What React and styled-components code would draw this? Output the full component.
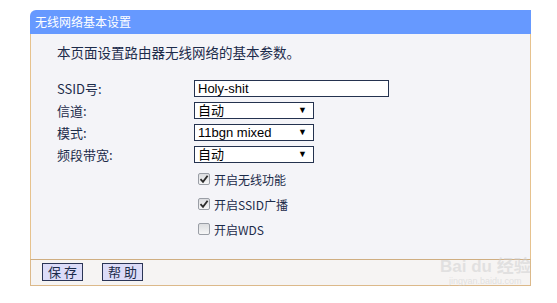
import React from "react";
import styled, { createGlobalStyle } from "styled-components";

const GlobalStyle = createGlobalStyle`
  body {
    margin: 0;
    background: #ffffff;
    font-family: "Noto Sans CJK SC", "Liberation Sans", sans-serif;
  }
`;

function Checkbox({ checked }) {
  return (
    <Box>
      {checked && (
        <svg width="10" height="10" viewBox="0 0 10 10">
          <path d="M1.5 5.2 L4 7.8 L8.6 1.8" fill="none" stroke="#2b2b2b" strokeWidth="1.8" />
        </svg>
      )}
    </Box>
  );
}

function Select({ value }) {
  return (
    <SelectBox>
      <span>{value}</span>
      <Arrow>▼</Arrow>
    </SelectBox>
  );
}

export default function App() {
  return (
    <>
      <GlobalStyle />
      <Page>
        <Panel>
          <Header>无线网络基本设置</Header>
          <Body>
            <Intro>本页面设置路由器无线网络的基本参数。</Intro>
            <Form>
              <Label>SSID号:</Label>
              <TextInput>Holy-shit</TextInput>
              <Label>信道:</Label>
              <Select value="自动" />
              <Label>模式:</Label>
              <Select value="11bgn mixed" />
              <Label>频段带宽:</Label>
              <Select value="自动" />
            </Form>
            <Options>
              <Option>
                <Checkbox checked />
                开启无线功能
              </Option>
              <Option>
                <Checkbox checked />
                开启SSID广播
              </Option>
              <Option>
                <Checkbox />
                开启WDS
              </Option>
            </Options>
          </Body>
          <Footer>
            <Button>保 存</Button>
            <Button>帮 助</Button>
          </Footer>
        </Panel>
        <Watermark>
          <span>Bai du 经验</span>
          <small>jingyan.baidu.com</small>
        </Watermark>
      </Page>
    </>
  );
}

const Page = styled.div`
  position: relative;
  width: 557px;
  height: 303px;
  padding: 10px 0 0 30px;
  box-sizing: border-box;
`;

const Panel = styled.div`
  width: 501px;
  display: flex;
  flex-direction: column;
`;

const Header = styled.div`
  height: 24px;
  line-height: 23px;
  background: #6699ff;
  color: #ffffff;
  font-size: 12px;
  padding-left: 5px;
  border-top-left-radius: 6px;
`;

const Body = styled.div`
  height: 225px;
  box-sizing: border-box;
  background: #f4f4f8;
  border-left: 1px solid #e6c28e;
  border-right: 1px solid #e6c28e;
  padding: 9px 0 0 26px;
  color: #1c2b4a;
`;

const Intro = styled.div`
  font-size: 13.5px;
  line-height: 18px;
  height: 18px;
`;

const Form = styled.div`
  display: grid;
  grid-template-columns: 137px 195px;
  grid-auto-rows: 17px;
  row-gap: 5px;
  margin-top: 19px;
`;

const Label = styled.div`
  font-size: 13px;
  line-height: 17px;
`;

const Field = styled.div`
  box-sizing: border-box;
  height: 17px;
  border: 1px solid #24324f;
  background: #ffffff;
  color: #000000;
  font-family: "Liberation Sans", "Noto Sans CJK SC", sans-serif;
  font-size: 13px;
  line-height: 15px;
  padding-left: 3px;
`;

const TextInput = styled(Field)`
  width: 195px;
`;

const SelectBox = styled(Field)`
  width: 120px;
  display: flex;
  align-items: center;
  justify-content: space-between;
  padding-right: 6px;
`;

const Arrow = styled.span`
  font-size: 9px;
  color: #000000;
`;

const Options = styled.div`
  display: flex;
  flex-direction: column;
  gap: 11px;
  margin-top: 9px;
  padding-left: 141px;
`;

const Option = styled.div`
  display: flex;
  align-items: center;
  gap: 4px;
  height: 14px;
  font-size: 12px;
`;

const Box = styled.span`
  box-sizing: border-box;
  width: 12px;
  height: 12px;
  border: 1px solid #9a9ea6;
  border-radius: 2px;
  background: linear-gradient(#dcdde0, #f6f6f7);
  display: flex;
  align-items: center;
  justify-content: center;
`;

const Footer = styled.div`
  height: 27px;
  box-sizing: border-box;
  background: #f6f4f3;
  border: 1px solid #dcb98a;
  border-top-color: #cfae82;
  display: flex;
  gap: 19px;
  padding: 3px 0 0 11px;
`;

const Button = styled.div`
  box-sizing: border-box;
  width: 41px;
  height: 18px;
  background: #dcdcf8;
  border: 1px solid #2b3556;
  color: #1c2b4a;
  font-size: 13px;
  line-height: 16px;
  text-align: center;
`;

const Watermark = styled.div`
  position: absolute;
  left: 440px;
  top: 258px;
  display: flex;
  flex-direction: column;
  align-items: center;
  color: rgba(205, 205, 205, 0.5);
  font-family: "Liberation Sans", "Noto Sans CJK SC", sans-serif;
  span {
    font-size: 17px;
    font-weight: bold;
    line-height: 18px;
  }
  small {
    font-size: 9px;
    line-height: 10px;
  }
`;
